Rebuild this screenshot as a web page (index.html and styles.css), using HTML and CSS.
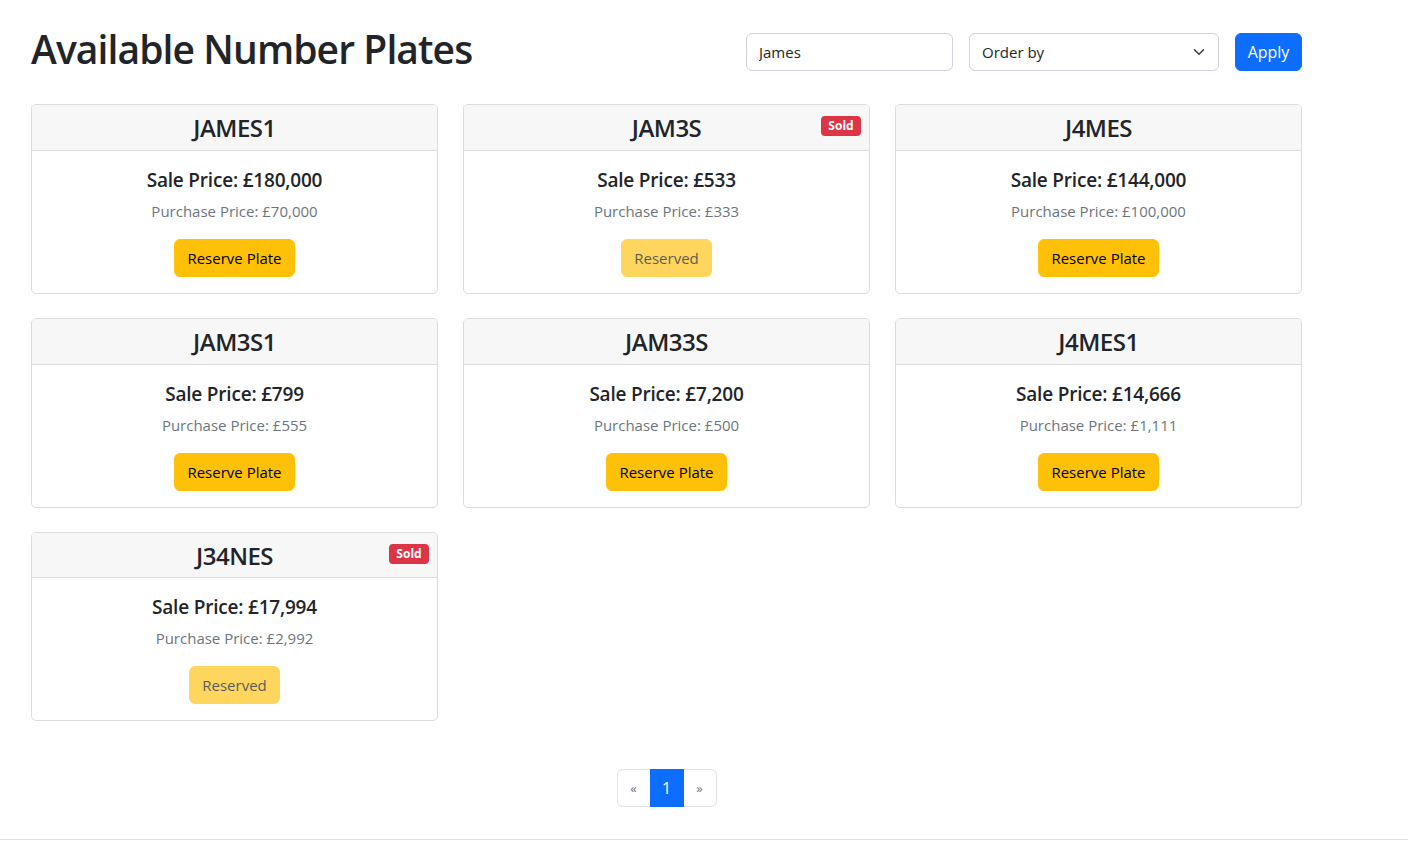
FILE: index.html
```html
<!DOCTYPE html>
<html lang="en">
<head>
<meta charset="utf-8">
<title>Available Number Plates</title>
<link rel="stylesheet" href="styles.css">
</head>
<body>
<main class="container">
  <header class="topbar">
    <h1 class="title">Available Number Plates</h1>
    <form class="filters">
      <input class="field search" type="text" value="James">
      <div class="field select">
        <span>Order by</span>
        <svg class="chev" width="12" height="12" viewBox="0 0 16 16"><path d="M2 5l6 6 6-6" fill="none" stroke="#343a40" stroke-width="2" stroke-linecap="round" stroke-linejoin="round"/></svg>
      </div>
      <button type="button" class="btn btn-primary">Apply</button>
    </form>
  </header>

  <section class="grid">
    <article class="card">
      <div class="card-header"><h4 class="plate">JAMES1</h4></div>
      <div class="card-body">
        <h5 class="sale">Sale Price: £180,000</h5>
        <p class="purchase">Purchase Price: £70,000</p>
        <button type="button" class="btn btn-warning">Reserve Plate</button>
      </div>
    </article>
    <article class="card">
      <div class="card-header"><h4 class="plate">JAM3S</h4><span class="badge">Sold</span></div>
      <div class="card-body">
        <h5 class="sale">Sale Price: £533</h5>
        <p class="purchase">Purchase Price: £333</p>
        <button type="button" class="btn btn-warning disabled">Reserved</button>
      </div>
    </article>
    <article class="card">
      <div class="card-header"><h4 class="plate">J4MES</h4></div>
      <div class="card-body">
        <h5 class="sale">Sale Price: £144,000</h5>
        <p class="purchase">Purchase Price: £100,000</p>
        <button type="button" class="btn btn-warning">Reserve Plate</button>
      </div>
    </article>
    <article class="card">
      <div class="card-header"><h4 class="plate">JAM3S1</h4></div>
      <div class="card-body">
        <h5 class="sale">Sale Price: £799</h5>
        <p class="purchase">Purchase Price: £555</p>
        <button type="button" class="btn btn-warning">Reserve Plate</button>
      </div>
    </article>
    <article class="card">
      <div class="card-header"><h4 class="plate">JAM33S</h4></div>
      <div class="card-body">
        <h5 class="sale">Sale Price: £7,200</h5>
        <p class="purchase">Purchase Price: £500</p>
        <button type="button" class="btn btn-warning">Reserve Plate</button>
      </div>
    </article>
    <article class="card">
      <div class="card-header"><h4 class="plate">J4MES1</h4></div>
      <div class="card-body">
        <h5 class="sale">Sale Price: £14,666</h5>
        <p class="purchase">Purchase Price: £1,111</p>
        <button type="button" class="btn btn-warning">Reserve Plate</button>
      </div>
    </article>
    <article class="card">
      <div class="card-header"><h4 class="plate">J34NES</h4><span class="badge">Sold</span></div>
      <div class="card-body">
        <h5 class="sale">Sale Price: £17,994</h5>
        <p class="purchase">Purchase Price: £2,992</p>
        <button type="button" class="btn btn-warning disabled">Reserved</button>
      </div>
    </article>
  </section>

  <nav class="pager">
    <ul class="pagination">
      <li class="page-item disabled"><span class="page-link">«</span></li>
      <li class="page-item active"><span class="page-link">1</span></li>
      <li class="page-item disabled"><span class="page-link">»</span></li>
    </ul>
  </nav>
</main>
<footer class="footer"></footer>
</body>
</html>
```

FILE: styles.css
```css
* { box-sizing: border-box; }

html, body {
  margin: 0;
  padding: 0;
  background: #fff;
}

body {
  font-family: "Open Sans", "Noto Sans", "Liberation Sans", sans-serif;
  font-size: 16px;
  line-height: 1.5;
  color: #212529;
}

.container {
  width: 1271px;
  margin-left: 31px;
}

.topbar {
  display: flex;
  justify-content: space-between;
  align-items: flex-start;
  padding-top: 25px;
  margin-bottom: 31px;
}

.title {
  margin: 0;
  font-size: 39px;
  line-height: 48px;
  font-weight: 600;
  letter-spacing: -0.9px;
  height: 48px;
}

.filters {
  display: flex;
  gap: 16px;
  margin-top: 8px;
}

.field {
  height: 38px;
  border: 1px solid #ced4da;
  border-radius: 6px;
  font: inherit;
  font-size: 15px;
  color: #212529;
  padding: 0 12px;
  background: #fff;
}

.search {
  width: 207px;
  outline: none;
}

.select {
  width: 250px;
  display: flex;
  align-items: center;
  justify-content: space-between;
  padding-right: 13px;
}

.chev {
  display: block;
}

.btn {
  font: inherit;
  font-size: 15px;
  line-height: 24px;
  height: 38px;
  padding: 6px 12px;
  border-radius: 6px;
  border: 1px solid transparent;
  cursor: pointer;
}

.btn-primary {
  background: #0d6efd;
  border-color: #0d6efd;
  color: #fff;
  width: 67px;
  padding: 6px 0;
  font-size: 16px;
}

.btn-warning {
  background: #ffc107;
  border-color: #ffc107;
  color: #000;
}

.btn-warning.disabled {
  opacity: .65;
  cursor: default;
}

.grid {
  display: grid;
  grid-template-columns: repeat(3, 407px);
  column-gap: 25px;
  row-gap: 24px;
}

.card {
  border: 1px solid #dcdcdc;
  border-radius: 5px;
  overflow: hidden;
  background: #fff;
}

.card-header {
  position: relative;
  background: #f7f7f7;
  border-bottom: 1px solid #dcdcdc;
  padding: 9px 16px 7px;
  text-align: center;
}

.plate {
  margin: 0;
  font-size: 24px;
  line-height: 28.8px;
  font-weight: 600;
  letter-spacing: -0.5px;
}

.badge {
  position: absolute;
  top: 11px;
  right: 8px;
  width: 40px;
  height: 20px;
  text-align: center;
  background: #dc3545;
  color: #fff;
  font-size: 12px;
  font-weight: 700;
  line-height: 20px;
  border-radius: 4px;
}

.card-body {
  padding: 16px;
  text-align: center;
}

.sale {
  margin: 0 0 8px;
  padding-top: 1px;
  height: 24px;
  font-size: 19px;
  line-height: 24px;
  font-weight: 600;
  letter-spacing: -0.2px;
}

.purchase {
  margin: 0 0 16px;
  color: #6c757d;
  font-size: 15px;
  line-height: 22px;
  padding-top: 1px;
  height: 24px;
}

.pager {
  display: flex;
  justify-content: center;
  margin-top: 48px;
  margin-bottom: 32px;
}

.pagination {
  display: flex;
  list-style: none;
  margin: 0;
  padding: 0;
}

.page-link {
  display: block;
  height: 38px;
  padding: 6px 0;
  line-height: 24px;
  border: 1px solid #dee2e6;
  background: #fff;
  color: #0d6efd;
  font-size: 16px;
  text-align: center;
}

.page-item + .page-item .page-link {
  margin-left: -1px;
}

.page-item:first-child .page-link {
  border-radius: 6px 0 0 6px;
}

.page-item:last-child .page-link {
  border-radius: 0 6px 6px 0;
}

.page-item.disabled .page-link {
  color: #6c757d;
  font-size: 13px;
  width: 34px;
}

.page-item.active .page-link {
  background: #0d6efd;
  border-color: #0d6efd;
  color: #fff;
  position: relative;
  width: 34px;
}

.footer {
  border-top: 1px solid #dee2e6;
  height: 60px;
}
```
